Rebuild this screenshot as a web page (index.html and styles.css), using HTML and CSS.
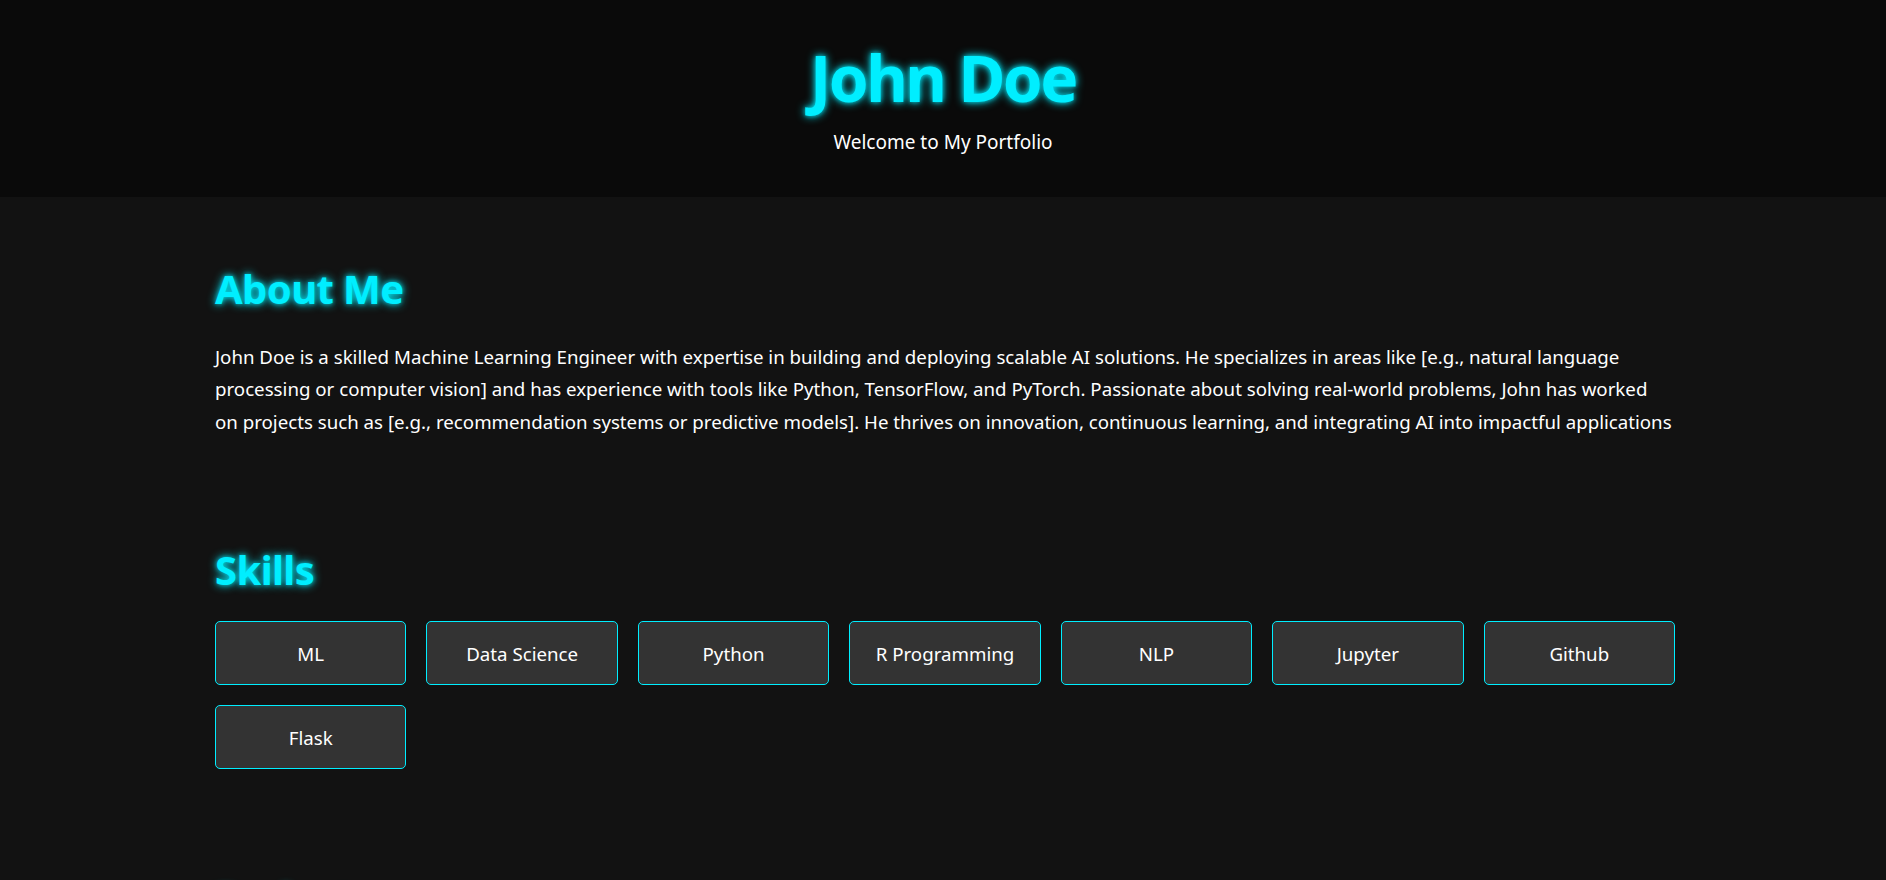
FILE: index.html
```html
<!DOCTYPE html>
<html lang="en">
<head>
<meta charset="utf-8">
<title>John Doe - Portfolio</title>
<link rel="stylesheet" href="styles.css">
</head>
<body>
<header class="site-header">
  <h1 class="site-title">John Doe</h1>
  <p class="site-subtitle">Welcome to My Portfolio</p>
</header>
<main class="container">
  <section class="section about">
    <h2 class="section-title">About Me</h2>
    <p class="about-text">John Doe is a skilled Machine Learning Engineer with expertise in building and deploying scalable AI solutions. He specializes in areas like [e.g., natural language processing or computer vision] and has experience with tools like Python, TensorFlow, and PyTorch. Passionate about solving real-world problems, John has worked on projects such as [e.g., recommendation systems or predictive models]. He thrives on innovation, continuous learning, and integrating AI into impactful applications</p>
  </section>
  <section class="section skills">
    <h2 class="section-title">Skills</h2>
    <div class="skills-grid">
      <div class="skill">ML</div>
      <div class="skill">Data Science</div>
      <div class="skill">Python</div>
      <div class="skill">R Programming</div>
      <div class="skill">NLP</div>
      <div class="skill">Jupyter</div>
      <div class="skill">Github</div>
      <div class="skill">Flask</div>
    </div>
  </section>
  <section class="section projects">
    <h2 class="section-title">Projects</h2>
  </section>
</main>
</body>
</html>
```
FILE: styles.css
```css
html, body {
  margin: 0;
  padding: 0;
}
body {
  background: #121212;
  color: #ffffff;
  font-family: "Noto Sans", "Open Sans", sans-serif;
}
.site-header {
  background: #0a0a0a;
  text-align: center;
  padding: 40px 0 41px;
}
.site-title {
  margin: 0;
  font-size: 64px;
  line-height: 1.2;
  font-weight: 700;
  color: #00eeff;
  text-shadow: 0 0 10px #00eeff, 0 0 4px rgba(0, 238, 255, 0.6);
  letter-spacing: -2.5px;
}
.site-subtitle {
  margin: 11px 0 0;
  font-size: 19px;
  line-height: 28px;
}
.container {
  width: 1460px;
  margin: 0 0 0 calc(50% - 728px);
}
.section {
  padding-top: 68px;
}
.section + .section {
  padding-top: 108px;
}
.section-title {
  margin: 0;
  font-size: 40px;
  line-height: 1.2;
  font-weight: 700;
  color: #00eeff;
  text-shadow: 0 0 10px #00eeff, 0 0 4px rgba(0, 238, 255, 0.6);
  letter-spacing: -0.6px;
}
.about-text {
  margin: 28px 0 0;
  font-size: 18.7px;
  line-height: 32.4px;
}
.skills-grid {
  margin-top: 27px;
  display: grid;
  grid-template-columns: repeat(auto-fill, minmax(180px, 1fr));
  gap: 20px;
}
.skill {
  background: #333333;
  border: 1px solid #00eeff;
  border-radius: 5px;
  height: 64px;
  box-sizing: border-box;
  display: flex;
  align-items: center;
  justify-content: center;
  font-size: 18.7px;
}
```
